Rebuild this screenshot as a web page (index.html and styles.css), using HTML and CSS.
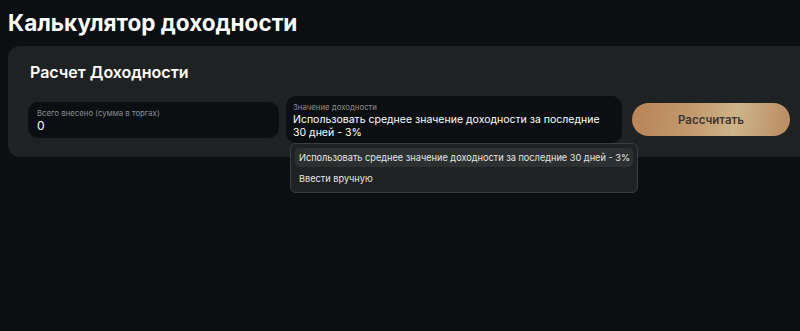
FILE: index.html
```html
<!DOCTYPE html>
<html lang="ru">
<head>
    <meta charset="UTF-8">
    <meta name="viewport" content="width=device-width, initial-scale=1.0">
    <title>Калькулятор доходности</title>
    <link rel="stylesheet" href="styles.css">
</head>
<body>
    <h1 class="page-title">Калькулятор доходности</h1>

    <div class="card">
        <h2 class="card-title">Расчет Доходности</h2>

        <div class="calc-row">
            <div class="field field-sum">
                <span class="field-label">Всего внесено (сумма в торгах)</span>
                <span class="field-value">0</span>
            </div>

            <div class="field-wrap">
                <div class="field field-rate">
                    <span class="field-label">Значение доходности</span>
                    <span class="field-value">Использовать среднее значение доходности за последние 30 дней - 3%</span>
                </div>
                <!-- open select menu -->
                <ul class="menu">
                    <li class="menu-item active">Использовать среднее значение доходности за последние 30 дней - 3%</li>
                    <li class="menu-item">Ввести вручную</li>
                </ul>
            </div>

            <button class="calc-btn">Рассчитать</button>
        </div>
    </div>
</body>
</html>
```

FILE: styles.css
```css
body {
    margin: 0;
    min-height: 100vh;
    box-sizing: border-box;
    padding: 8px 0 0 8px;
    background-color: #0b0f12;
    color: #fff;
    font-family: Inter, "Noto Sans", sans-serif;
}

.page-title {
    margin: 0;
    font-size: 22.5px;
    font-weight: 700;
    line-height: 30px;
}

.card {
    margin-top: 8px;
    padding: 16px 0 14px 20px;
    background-color: #1f2222;
    border-radius: 12px 0 0 12px;
}

.card-title {
    margin: 0 0 13px 2px;
    font-size: 16px;
    font-weight: 600;
    line-height: 21px;
}

.calc-row {
    display: flex;
    align-items: center;
}

.calc-row > * {
    flex-shrink: 0;
}

.field {
    display: flex;
    flex-direction: column;
    background-color: #0b0f12;
    border-radius: 10px;
}

.field-label {
    font-size: 7.8px;
    line-height: 11px;
    color: #8b8e90;
}

.field-value {
    font-size: 10.5px;
    line-height: 13px;
    color: #fff;
}

.field-sum {
    width: 251px;
    height: 36px;
    padding: 6px 9px 0;
    box-sizing: border-box;
    margin-right: 7px;
}

.field-sum .field-value {
    font-size: 12px;
}

.field-wrap {
    position: relative;
    margin-right: 10px;
}

.field-rate {
    width: 336px;
    height: 47px;
    padding: 6px 7px 0;
    box-sizing: border-box;
}

.menu {
    position: absolute;
    left: 4px;
    top: 47px;
    width: 348px;
    margin: 0;
    padding: 4px;
    box-sizing: border-box;
    list-style: none;
    background-color: #1f2222;
    border: 1px solid #3a3d3f;
    border-radius: 6px;
}

.menu-item {
    padding: 0 4px;
    font-size: 9.2px;
    line-height: 19px;
    color: #e6e6e6;
    border-radius: 4px;
    white-space: nowrap;
}

.menu-item + .menu-item {
    margin-top: 2px;
}

.menu-item.active {
    background-color: #2d3030;
}

.calc-btn {
    width: 158px;
    height: 33px;
    border: none;
    border-radius: 100px;
    background: linear-gradient(100deg, #b88359 0%, #c49a6f 40%, #cdb48a 65%, #b98a60 100%);
    color: #3b3632;
    font-family: Inter, "Noto Sans", sans-serif;
    font-size: 11.5px;
    font-weight: 600;
    cursor: pointer;
}
```
